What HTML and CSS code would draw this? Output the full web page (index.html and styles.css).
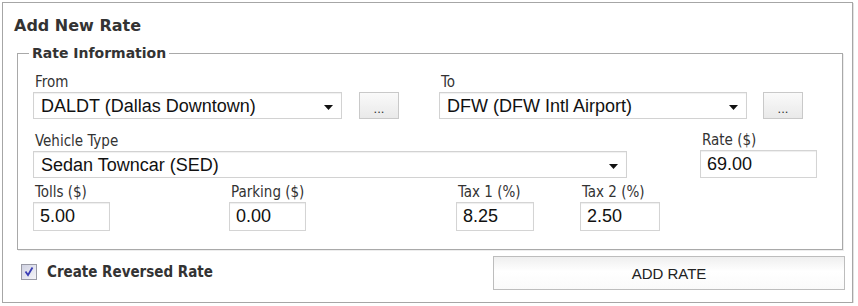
FILE: index.html
```html
<!DOCTYPE html>
<html lang="en">
<head>
<meta charset="UTF-8">
<title>Add New Rate</title>
<link rel="stylesheet" href="styles.css">
</head>
<body>
<div class="panel">
  <div class="panel-title">Add New Rate</div>

  <fieldset class="rate-info">
    <legend>Rate Information</legend>

    <!-- from / to -->
    <div class="row row-first">
      <div class="field w-from">
        <label>From</label>
        <div class="select"><span>DALDT (Dallas Downtown)</span>
          <svg width="9" height="5" viewBox="0 0 9 5"><path d="M0 0H9L4.5 5Z" fill="#111"/></svg>
        </div>
      </div>
      <button class="btn-more gap-from">...</button>
      <div class="field w-to">
        <label>To</label>
        <div class="select"><span>DFW (DFW Intl Airport)</span>
          <svg width="9" height="5" viewBox="0 0 9 5"><path d="M0 0H9L4.5 5Z" fill="#111"/></svg>
        </div>
      </div>
      <button class="btn-more gap-to">...</button>
    </div>

    <!-- vehicle / rate -->
    <div class="row row-second">
      <div class="field w-vehicle">
        <label>Vehicle Type</label>
        <div class="select"><span>Sedan Towncar (SED)</span>
          <svg width="9" height="5" viewBox="0 0 9 5"><path d="M0 0H9L4.5 5Z" fill="#111"/></svg>
        </div>
      </div>
      <div class="field w-rate">
        <label>Rate ($)</label>
        <input class="text tall" type="text" value="69.00">
      </div>
    </div>

    <!-- extras -->
    <div class="row row-third">
      <div class="field w-tolls">
        <label>Tolls ($)</label>
        <input class="text" type="text" value="5.00">
      </div>
      <div class="field w-parking">
        <label>Parking ($)</label>
        <input class="text" type="text" value="0.00">
      </div>
      <div class="field w-tax1">
        <label>Tax 1 (%)</label>
        <input class="text" type="text" value="8.25">
      </div>
      <div class="field w-tax2">
        <label>Tax 2 (%)</label>
        <input class="text" type="text" value="2.50">
      </div>
    </div>
  </fieldset>

  <div class="footer">
    <div class="check">
      <svg width="16" height="16" viewBox="0 0 16 16">
        <defs>
          <linearGradient id="cbg" x1="0" y1="0" x2="1" y2="1">
            <stop offset="0" stop-color="#cfd1e2"/>
            <stop offset="1" stop-color="#f6f6f9"/>
          </linearGradient>
        </defs>
        <rect x="0.5" y="0.5" width="15" height="15" fill="url(#cbg)" stroke="#9a9ba6"/>
        <path d="M4.5 7.5L7 11L11.5 3.5" fill="none" stroke="#3a3db5" stroke-width="1.8"/>
      </svg>
      <span>Create Reversed Rate</span>
    </div>
    <button class="btn-add">ADD RATE</button>
  </div>
</div>
</body>
</html>
```

FILE: styles.css
```css
html, body {
    margin: 0;
    padding: 0;
    background: #fff;
    font-family: "DejaVu Sans Condensed", "DejaVu Sans", sans-serif;
    color: #222;
}

/* outer box */
.panel {
    box-sizing: border-box;
    width: 851px;
    height: 301px;
    margin: 2px 0 0 2px;
    border: 1px solid #a6a6a6;
    box-shadow: 1px 1px 0 #e2e2e2;
}

.panel-title {
    font-family: "DejaVu Sans", sans-serif;
    font-weight: bold;
    font-size: 16px;
    line-height: 20px;
    color: #333;
    padding: 13px 0 0 11px;
}

/* fieldset */
.rate-info {
    box-sizing: border-box;
    width: 826px;
    margin: 8px 0 0 14px;
    padding: 12px 15px 18px 15px;
    border: 1px solid #a9a9a9;
    box-shadow: 1px 1px 0 #ededed;
}

.rate-info legend {
    font-family: "DejaVu Sans", sans-serif;
    font-weight: bold;
    font-size: 14px;
    line-height: 18px;
    color: #333;
    padding: 0 3px;
    margin-left: -4px;
}

.row {
    display: flex;
    align-items: flex-end;
}

.row-second { margin-top: 13px; }
.row-third { margin-top: 6px; }

.field label {
    display: block;
    font-size: 15px;
    line-height: 16px;
    color: #333;
    padding-left: 2px;
    margin-bottom: 2px;
}

.w-from { width: 309px; }
.w-to { width: 308px; margin-left: 40px; }
.w-vehicle { width: 594px; }
.w-rate { width: 117px; margin-left: 73px; }
.w-tolls { width: 77px; }
.w-parking { width: 77px; margin-left: 119px; }
.w-tax1 { width: 78px; margin-left: 150px; }
.w-tax2 { width: 80px; margin-left: 46px; }

/* dropdowns */
.select {
    box-sizing: border-box;
    height: 27px;
    display: flex;
    align-items: center;
    justify-content: space-between;
    padding: 1px 8px 0 7px;
    border: 1px solid #d2d2d2;
    background: #fff;
    box-shadow: inset 0 1px 1px #f0f0f0;
    font-family: "Liberation Sans", Arial, sans-serif;
    font-size: 18px;
    color: #111;
}

.select svg {
    flex: none;
    margin-top: 2px;
}

/* text inputs */
.text {
    box-sizing: border-box;
    display: block;
    width: 100%;
    height: 29px;
    margin: 0;
    padding: 0 6px;
    border: 1px solid #d4d4d4;
    box-shadow: inset 0 1px 1px #eee;
    font-family: "Liberation Sans", Arial, sans-serif;
    font-size: 18px;
    color: #111;
    outline: none;
}

.text.tall { height: 28px; }

/* small browse buttons */
.btn-more {
    box-sizing: border-box;
    width: 40px;
    height: 27px;
    padding: 6px 0 0;
    border: 1px solid #c9c9c9;
    background: linear-gradient(#fafafa, #e9e9e9);
    font-family: "Liberation Sans", Arial, sans-serif;
    font-size: 13px;
    color: #333;
}

.gap-from { margin-left: 17px; }
.gap-to { margin-left: 16px; }

/* footer row */
.footer {
    display: flex;
    align-items: center;
    margin-top: 6px;
}

.check {
    display: flex;
    align-items: center;
    margin-left: 18px;
    margin-bottom: 3px;
}

.check span {
    margin-left: 10px;
    font-weight: bold;
    font-size: 15px;
    color: #333;
}

.btn-add {
    box-sizing: border-box;
    width: 352px;
    height: 34px;
    margin-left: auto;
    margin-right: 7px;
    border: 1px solid #bdbdbd;
    background: linear-gradient(#efefef, #fff 45%, #fafafa);
    font-family: "Liberation Sans", Arial, sans-serif;
    font-size: 15px;
    color: #222;
}
```
